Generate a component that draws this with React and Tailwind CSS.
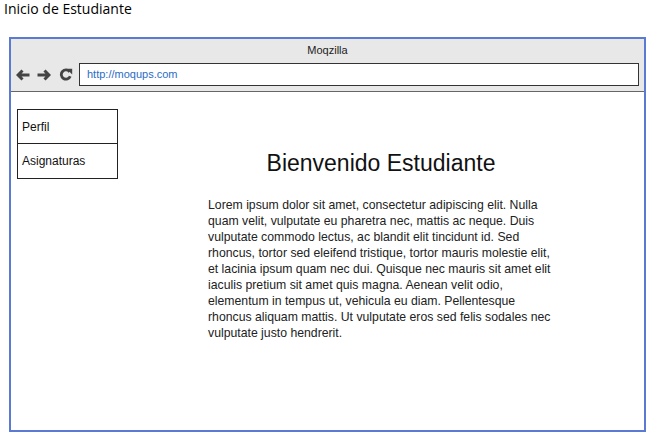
export default function App() {
  return (
    <div className="w-[654px] h-[437px] bg-white relative" style={{ fontFamily: '"Liberation Sans", Arial, sans-serif' }}>
      <div className="h-[18px] pl-[4px] text-[14px] leading-[18px] text-black" style={{ fontFamily: '"Open Sans", "Noto Sans", sans-serif' }}>
        Inicio de Estudiante
      </div>
      <div className="ml-[9px] mt-[19px] w-[637px] h-[395px] border-2 border-[#5b7ad3] flex flex-col">
        <div className="h-[53px] bg-[#e8e8e8] border-b-[1.5px] border-[#666] flex flex-col">
          <div className="h-[22px] flex items-center justify-center text-[11px] text-[#222]">Moqzilla</div>
          <div className="flex items-center pl-[5px] pr-[5px] mt-[2px]">
            <div className="flex items-center text-[#444]">
              <svg width="14" height="12" viewBox="0 0 14 12">
                <path d="M6.5 1.5 L2 6 L6.5 10.5 M2.2 6 L13.5 6" fill="none" stroke="#444" strokeWidth="3" strokeLinejoin="miter" />
              </svg>
              <svg width="14" height="12" viewBox="0 0 14 12" className="ml-[7px]">
                <path d="M7.5 1.5 L12 6 L7.5 10.5 M11.8 6 L0.5 6" fill="none" stroke="#444" strokeWidth="3" strokeLinejoin="miter" />
              </svg>
              <svg width="14" height="13" viewBox="0 0 14 13" className="ml-[8px]">
                <path d="M10.6 3.8 A4.6 4.6 0 1 0 11.2 8.2" fill="none" stroke="#444" strokeWidth="2.8" />
                <path d="M7.5 0.8 L13.2 0.8 L13.2 6.5 Z" fill="#444" />
              </svg>
            </div>
            <div className="ml-[6px] flex-1 h-[23px] bg-white border border-[#333] flex items-center pl-[7px] text-[11px] text-[#2a6cc7]">
              http://moqups.com
            </div>
          </div>
        </div>
        <div className="flex-1 flex items-start">
          <div className="ml-[6px] mt-[17px] w-[101px] border border-[#222] text-[12px] text-[#111]">
            <div className="h-[34px] flex items-center pl-[4px] border-b border-[#222]">Perfil</div>
            <div className="h-[34px] flex items-center pl-[4px]">Asignaturas</div>
          </div>
          <div className="ml-[90px] mt-[56px] w-[346px] flex flex-col">
            <div className="text-center text-[23px] leading-[30px] text-[#111]">Bienvenido Estudiante</div>
            <p className="mt-[19px] text-[12.25px] leading-[16px] text-[#222]">
              Lorem ipsum dolor sit amet, consectetur adipiscing elit. Nulla quam velit, vulputate eu pharetra nec, mattis ac neque. Duis vulputate commodo lectus, ac blandit elit tincidunt id. Sed rhoncus, tortor sed eleifend tristique, tortor mauris molestie elit, et lacinia ipsum quam nec dui. Quisque nec mauris sit amet elit iaculis pretium sit amet quis magna. Aenean velit odio, elementum in tempus ut, vehicula eu diam. Pellentesque rhoncus aliquam mattis. Ut vulputate eros sed felis sodales nec vulputate justo hendrerit.
            </p>
          </div>
        </div>
      </div>
    </div>
  );
}
